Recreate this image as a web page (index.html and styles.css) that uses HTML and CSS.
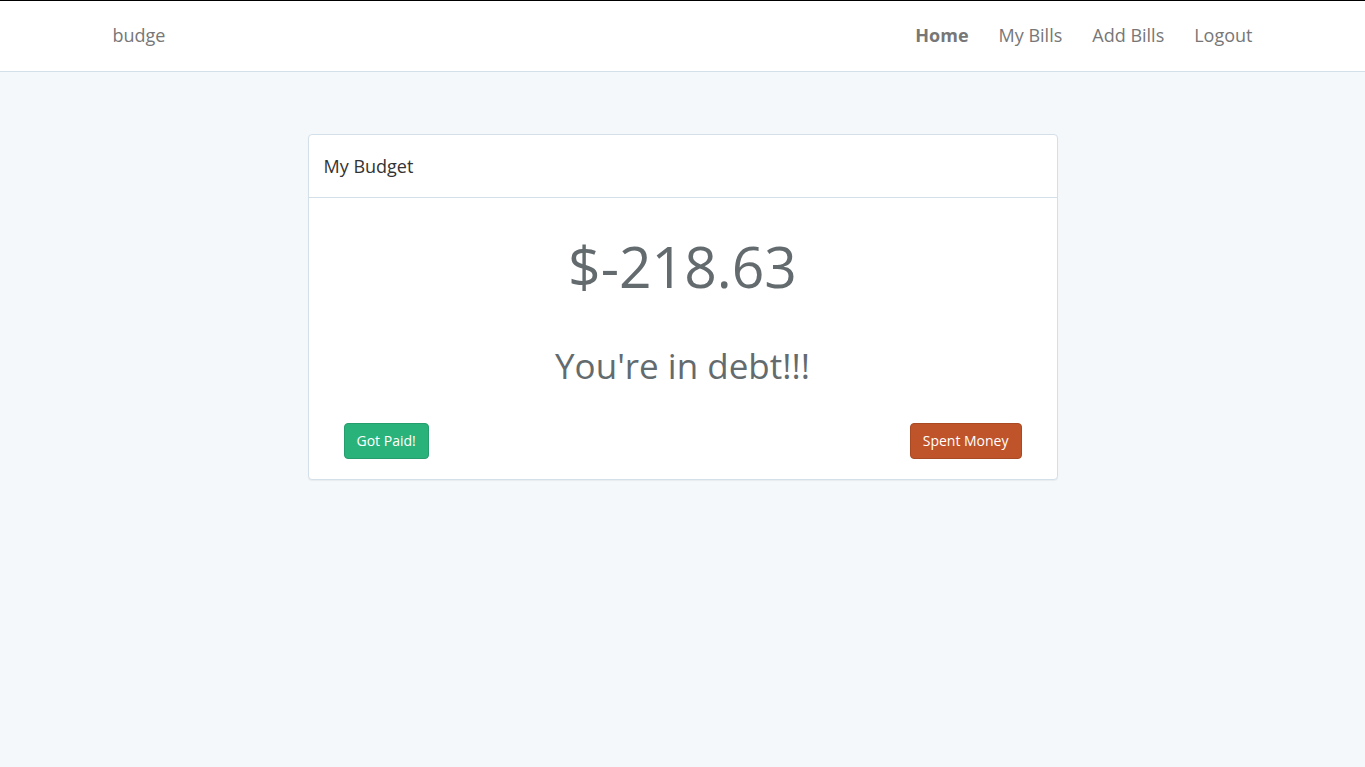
FILE: index.html
```html
<!DOCTYPE html>
<html lang="en">
<head>
<meta charset="utf-8">
<title>budge</title>
<link rel="stylesheet" href="styles.css">
</head>
<body>
<nav class="navbar">
  <div class="container nav-inner">
    <a class="brand" href="#">budge</a>
    <ul class="nav-links">
      <li><a class="active" href="#">Home</a></li>
      <li><a href="#">My Bills</a></li>
      <li><a href="#">Add Bills</a></li>
      <li><a href="#">Logout</a></li>
    </ul>
  </div>
</nav>
<main class="container main">
  <section class="panel">
    <div class="panel-heading">My Budget</div>
    <div class="panel-body">
      <div class="amount">$-218.63</div>
      <h1 class="status">You're in debt!!!</h1>
      <div class="actions">
        <button class="btn btn-success">Got Paid!</button>
        <button class="btn btn-danger">Spent Money</button>
      </div>
    </div>
  </section>
</main>
</body>
</html>
```
FILE: styles.css
```css
* { box-sizing: border-box; }
html, body { margin: 0; padding: 0; }
body {
  background: #f5f8fa;
  font-family: "Open Sans", "Noto Sans", sans-serif;
  color: #636b6f;
  font-size: 14px;
  line-height: 1.6;
  min-height: 767px;
}
.container {
  width: 1170px;
  margin: 0 auto;
  padding: 0 15px;
}
.navbar {
  background: #fff;
  border-top: 1px solid #000;
  border-bottom: 1px solid #d3e0e9;
  height: 72px;
}
.nav-inner {
  display: flex;
  align-items: center;
  justify-content: space-between;
  height: 68px;
}
.brand {
  font-size: 18px;
  color: #777;
  text-decoration: none;
}
.nav-links {
  list-style: none;
  margin: 0 -15px 0 0;
  padding: 0;
  display: flex;
}
.nav-links a {
  display: block;
  padding: 0 15px;
  font-size: 18px;
  color: #777;
  text-decoration: none;
}
.nav-links a.active { font-weight: 700; color: #777; }
.main { padding-top: 62px; }
.panel {
  width: 750px;
  margin: 0 auto;
  background: #fff;
  border: 1px solid #d3e0e9;
  border-radius: 4px;
  box-shadow: 0 1px 1px rgba(0,0,0,.05);
}
.panel-heading {
  height: 63px;
  display: flex;
  align-items: center;
  padding: 0 15px;
  font-size: 18px;
  color: #333;
  border-bottom: 1px solid #d3e0e9;
}
.panel-body {
  padding: 28px 35px 20px;
  text-align: center;
}
.amount {
  font-size: 57px;
  line-height: 80px;
  color: #636b6f;
  font-weight: 400;
}
.status {
  margin: 40px 0 37px;
  font-size: 35px;
  font-weight: 400;
  line-height: 40px;
  color: #636b6f;
}
.actions {
  display: flex;
  justify-content: space-between;
}
.btn {
  font-family: inherit;
  font-size: 14px;
  line-height: 22px;
  padding: 6px 12px;
  height: 36px;
  border-radius: 4px;
  border: 1px solid transparent;
  color: #fff;
  cursor: pointer;
}
.btn-success { background: #2ab27b; border-color: #259d6d; }
.btn-danger { background: #bf5329; border-color: #aa4a24; }
```
